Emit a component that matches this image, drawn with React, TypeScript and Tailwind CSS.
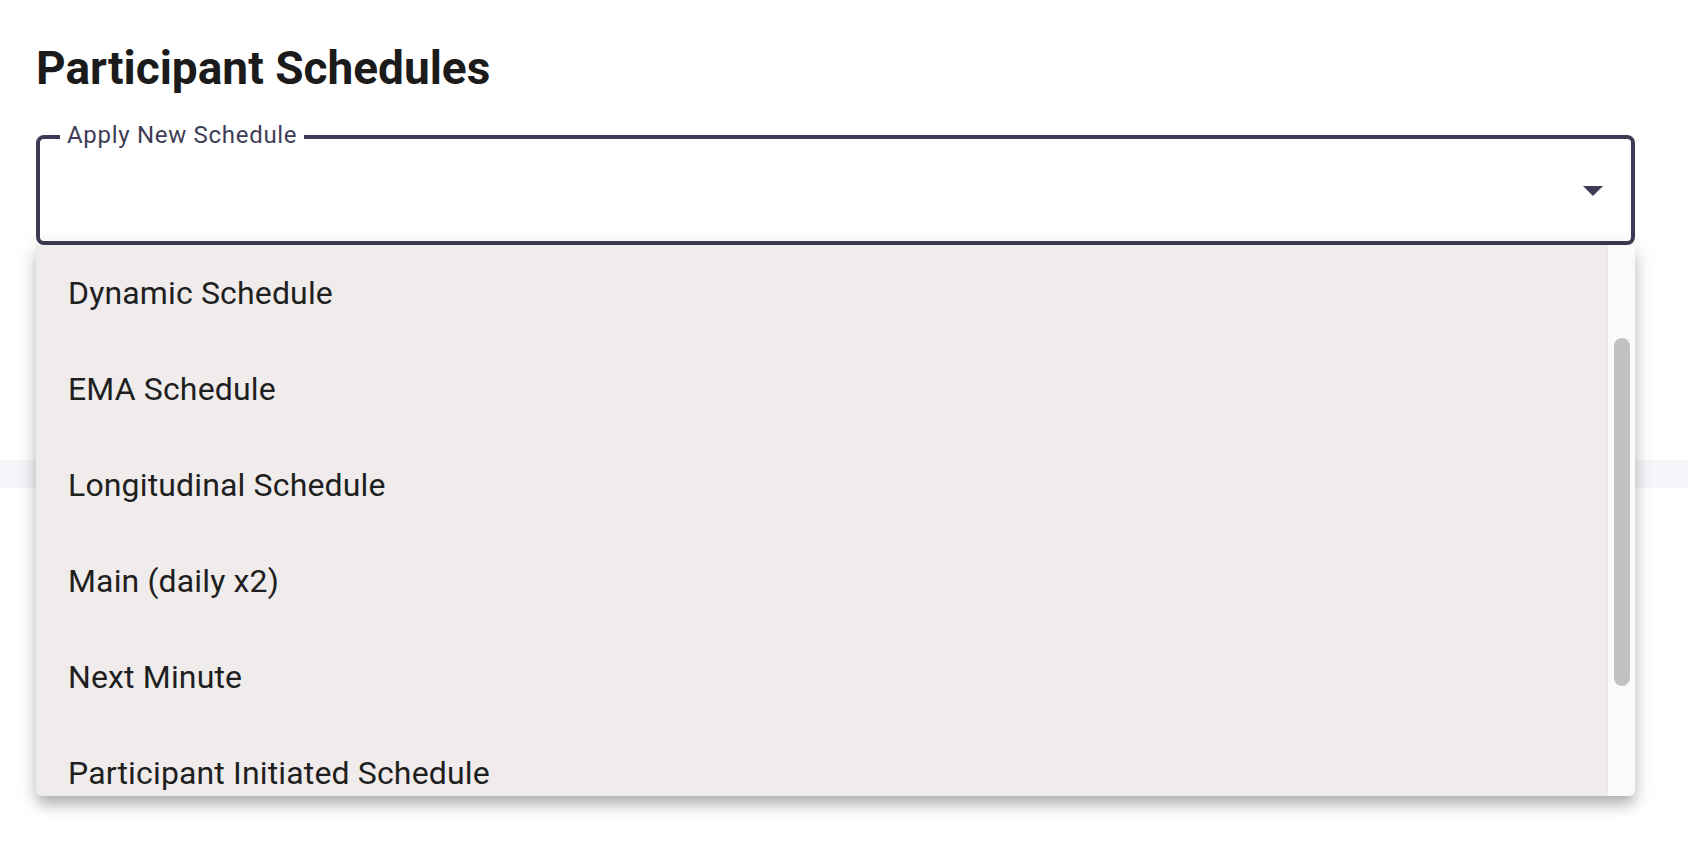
import React from "react";

const OPTIONS = [
  "Dynamic Schedule",
  "EMA Schedule",
  "Longitudinal Schedule",
  "Main (daily x2)",
  "Next Minute",
  "Participant Initiated Schedule",
];

function ArrowDropDown() {
  return (
    <svg width="48" height="48" viewBox="0 0 48 48" className="shrink-0">
      <path d="M14 20l10 10 10-10z" fill="#3f3d56" />
    </svg>
  );
}

export default function App() {
  return (
    <div className="min-h-screen w-full bg-white font-['Roboto','Liberation_Sans',sans-serif] overflow-hidden">
      <div className="px-[36px] pt-[44px]">
        <h1 className="text-[46px] font-bold leading-[48px] text-[#1b1b1b]">
          Participant Schedules
        </h1>

        <div className="relative mt-[43px] w-[1599px]">
          <div className="relative flex h-[110px] items-center justify-end rounded-[8px] border-[4px] border-[#3d3b54] pr-[14px]">
            <span className="absolute left-[20px] top-[-16px] bg-white px-[7px] text-[24px] leading-[24px] tracking-[0.7px] text-[#3f3d56]">
              Apply New Schedule
            </span>
            <ArrowDropDown />
          </div>

          {/* open menu of the select */}
          <div className="absolute left-0 right-0 top-full z-10 h-[551px] overflow-hidden rounded-b-[6px] bg-[#f0eceb] shadow-[0_10px_14px_-2px_rgba(0,0,0,0.25),0_4px_20px_3px_rgba(0,0,0,0.10)]">
            <ul className="flex flex-col pr-[28px]">
              {OPTIONS.map((o) => (
                <li
                  key={o}
                  className="flex h-[96px] shrink-0 items-center pl-[32px] text-[32px] leading-[48px] tracking-[0.15px] text-[#1f1f1f]"
                >
                  {o}
                </li>
              ))}
            </ul>
            <div className="absolute bottom-0 right-0 top-0 w-[28px] border-l border-[#e6e6e6] bg-[#fafafa]">
              <div className="absolute left-[6px] top-[93px] h-[348px] w-[16px] rounded-full bg-[#c1c1c1]" />
            </div>
          </div>
        </div>
      </div>

      <div className="mt-[215px] h-[28px] w-full bg-[#f4f6f9]" />
    </div>
  );
}
